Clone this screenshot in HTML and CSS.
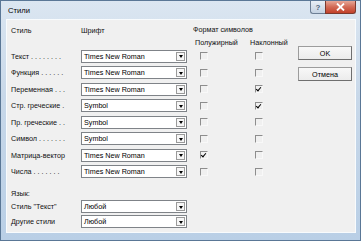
FILE: index.html
```html
<!DOCTYPE html>
<html lang="ru">
<head>
  <meta charset="UTF-8">
  <title>Стили</title>
  <link rel="stylesheet" href="styles.css">
</head>
<body>
  <div class="window">
    <div class="titlebar">
      <span class="title">Стили</span>
      <div class="caption-buttons">
        <span class="cap-btn help">?</span>
        <span class="cap-btn close">
          <svg width="9" height="8" viewBox="0 0 9 8"><path d="M1 0.5 L8 7.5 M8 0.5 L1 7.5" stroke="#fff" stroke-width="1.8"/></svg>
        </span>
      </div>
    </div>

    <div class="client">
      <div class="form">
        <div class="head">
          <div class="head-left">
            <span class="col-label">Стиль</span>
            <span class="col-font">Шрифт</span>
          </div>
          <div class="head-format">
            <span>Формат символов</span>
            <div class="head-sub">
              <span class="sub-bold">Полужирный</span>
              <span class="sub-italic">Наклонный</span>
            </div>
          </div>
        </div>

        <div class="row">
          <span class="label">Текст . . . . . . . .</span>
          <div class="combo"><span class="combo-text">Times New Roman</span><span class="arrow"></span></div>
          <span class="check first"></span>
          <span class="check second"></span>
        </div>
        <div class="row">
          <span class="label">Функция . . . . . .</span>
          <div class="combo"><span class="combo-text">Times New Roman</span><span class="arrow"></span></div>
          <span class="check first"></span>
          <span class="check second"></span>
        </div>
        <div class="row">
          <span class="label">Переменная . . .</span>
          <div class="combo"><span class="combo-text">Times New Roman</span><span class="arrow"></span></div>
          <span class="check first"></span>
          <span class="check second checked"></span>
        </div>
        <div class="row">
          <span class="label">Стр. греческие .</span>
          <div class="combo"><span class="combo-text">Symbol</span><span class="arrow"></span></div>
          <span class="check first"></span>
          <span class="check second checked"></span>
        </div>
        <div class="row">
          <span class="label">Пр. греческие . .</span>
          <div class="combo"><span class="combo-text">Symbol</span><span class="arrow"></span></div>
          <span class="check first"></span>
          <span class="check second"></span>
        </div>
        <div class="row">
          <span class="label">Символ . . . . . . .</span>
          <div class="combo"><span class="combo-text">Symbol</span><span class="arrow"></span></div>
          <span class="check first"></span>
          <span class="check second"></span>
        </div>
        <div class="row">
          <span class="label">Матрица-вектор</span>
          <div class="combo"><span class="combo-text">Times New Roman</span><span class="arrow"></span></div>
          <span class="check first checked"></span>
          <span class="check second"></span>
        </div>
        <div class="row">
          <span class="label">Числа . . . . . . .</span>
          <div class="combo"><span class="combo-text">Times New Roman</span><span class="arrow"></span></div>
          <span class="check first"></span>
          <span class="check second"></span>
        </div>

        <div class="lang">
          <div class="lang-title">Язык:</div>
          <div class="row lang-row">
            <span class="label">Стиль "Текст"</span>
            <div class="combo"><span class="combo-text">Любой</span><span class="arrow"></span></div>
          </div>
          <div class="row lang-row">
            <span class="label">Другие стили</span>
            <div class="combo"><span class="combo-text">Любой</span><span class="arrow"></span></div>
          </div>
        </div>
      </div>

      <div class="buttons">
        <div class="button">OK</div>
        <div class="button">Отмена</div>
      </div>
    </div>
  </div>
</body>
</html>
```

FILE: styles.css
```css
body {
  margin: 0;
  padding: 0;
  font-family: 'Liberation Sans', Arial, sans-serif;
  font-size: 7.2px;
  color: #111;
  background: #ffffff;
}

.window {
  width: 359px;
  height: 239px;
  border: 1px solid #5a7796;
  background: linear-gradient(to bottom, #dbe6f1 0%, #c8d8e9 40%, #b9cfe6 100%);
  display: flex;
  flex-direction: column;
}

.titlebar {
  height: 18px;
  display: flex;
  align-items: flex-start;
  justify-content: space-between;
}

.title {
  margin: 5px 0 0 7px;
  font-size: 7.6px;
  color: #000;
}

.caption-buttons {
  display: flex;
  margin-right: 4px;
}

.cap-btn {
  height: 13px;
  display: flex;
  align-items: center;
  justify-content: center;
  border: 1px solid #6d7f95;
  border-top: none;
  box-sizing: border-box;
}

.help {
  width: 15px;
  border-radius: 0 0 0 3px;
  border-right: none;
  background: linear-gradient(to bottom, #e9eff6, #c4d2e2);
  color: #51657d;
  font-size: 8px;
  font-weight: bold;
}

.close {
  width: 31px;
  border-color: #7b3a2e;
  border-radius: 0 0 3px 0;
  background: linear-gradient(to bottom, #e7a797 0%, #d26a55 50%, #c2412a 100%);
}

.client {
  margin: 0 4px 0 5px;
  height: 214px;
  background: #f0f0f0;
  border: 1px solid #f8fbfd;
  box-sizing: border-box;
  display: flex;
  padding: 4px 0 0 4px;
}

.form {
  width: 284px;
}

.head {
  display: flex;
  height: 24px;
}

.head-left {
  display: flex;
  width: 182px;
  padding-top: 2px;
}

.col-label {
  width: 70px;
}

.head-format {
  display: flex;
  flex-direction: column;
  padding-top: 1px;
  gap: 4px;
}

.head-sub {
  display: flex;
  padding-left: 2px;
}

.sub-bold {
  width: 55px;
}

.row {
  display: flex;
  align-items: center;
  height: 16.5px;
}

.label {
  width: 70px;
  white-space: nowrap;
}

.combo {
  width: 106px;
  height: 13px;
  box-sizing: border-box;
  border: 1px solid #7f8388;
  background: #ffffff;
  display: flex;
  align-items: center;
  justify-content: space-between;
}

.combo-text {
  padding-left: 2px;
  color: #000;
}

.arrow {
  width: 9px;
  height: 9px;
  margin-right: 1px;
  box-sizing: border-box;
  border: 1px solid #9a9a9a;
  background: #f6f6f6;
  display: flex;
  align-items: center;
  justify-content: center;
}

.arrow::after {
  content: "";
  border-left: 2.5px solid transparent;
  border-right: 2.5px solid transparent;
  border-top: 3px solid #000;
  margin-top: 1px;
}

.check {
  width: 8px;
  height: 8px;
  box-sizing: border-box;
  border-top: 1px solid #8d8d8d;
  border-left: 1px solid #8d8d8d;
  border-right: 1px solid #f8f8f8;
  border-bottom: 1px solid #f8f8f8;
  position: relative;
}

.check.first {
  margin-left: 13px;
}

.check.second {
  margin-left: 47px;
}

.check.checked::after {
  content: "";
  position: absolute;
  left: 1px;
  top: 0px;
  width: 2px;
  height: 4px;
  border-right: 1.5px solid #000;
  border-bottom: 1.5px solid #000;
  transform: rotate(40deg);
}

.lang {
  margin-top: 8px;
}

.lang-title {
  height: 11px;
  line-height: 11px;
}

.lang-row {
  height: 15px;
}

.buttons {
  display: flex;
  flex-direction: column;
  gap: 7px;
  margin: 22px 0 0 3px;
}

.button {
  width: 54px;
  height: 14px;
  box-sizing: border-box;
  border: 1px solid #9c9c9c;
  border-right-color: #6f6f6f;
  border-bottom-color: #6f6f6f;
  background: linear-gradient(to bottom, #f8f8f8, #ececec);
  display: flex;
  align-items: center;
  justify-content: center;
  color: #000;
}
```
